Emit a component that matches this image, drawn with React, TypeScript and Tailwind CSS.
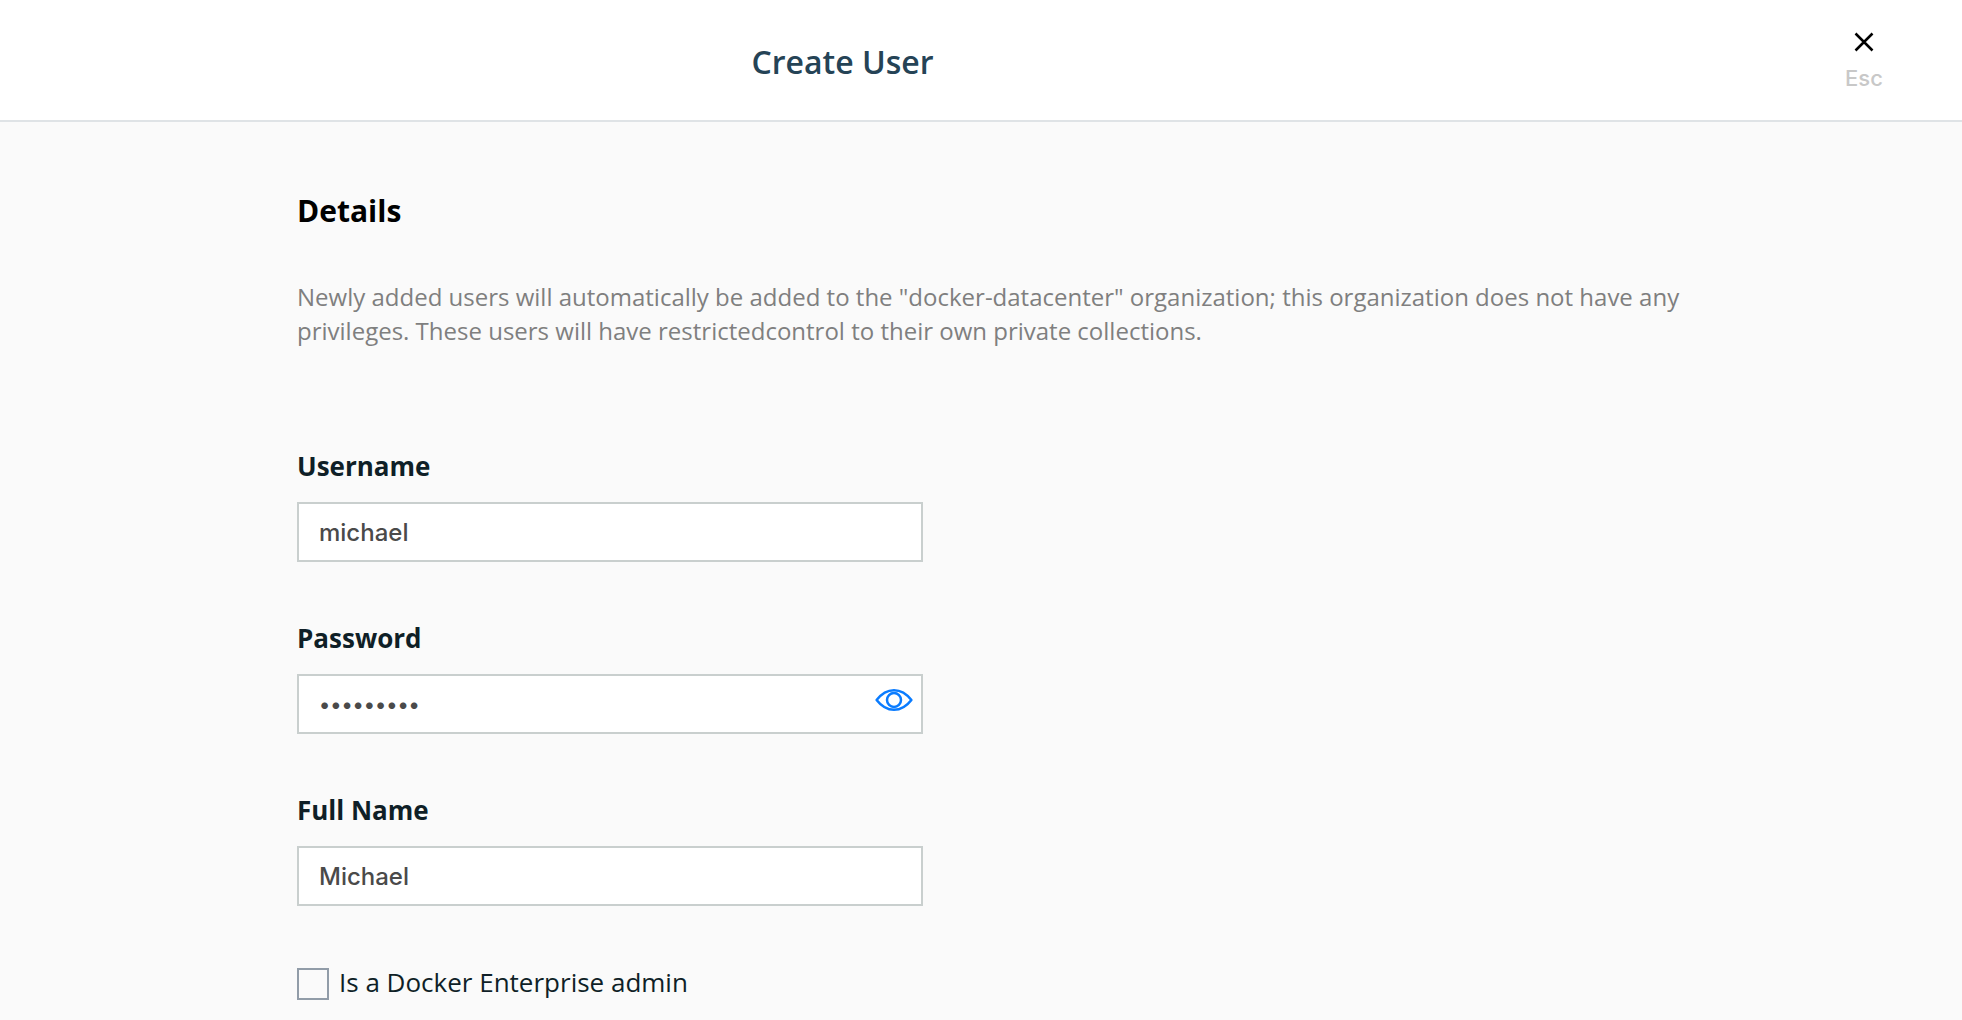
import { useState, type ReactNode } from "react";

type FieldProps = {
  id: string;
  label: string;
  value: string;
  type?: string;
  inputClass?: string;
  children?: ReactNode;
};

function Field({ id, label, value, type = "text", inputClass = "text-2xl", children }: FieldProps) {
  return (
    <div>
      <label htmlFor={id} className="block text-[26px] leading-9 font-bold text-[#0f1f27]">
        {label}
      </label>
      <div className="relative mt-[18px] w-full max-w-[626px]">
        <input
          id={id}
          type={type}
          defaultValue={value}
          className={`block h-[60px] w-full border-2 border-[#c9cfce] bg-white px-5 font-['Inter',sans-serif] font-medium text-[#4a4a4a] outline-none ${inputClass}`}
        />
        {children}
      </div>
    </div>
  );
}

export default function App() {
  const [shown, setShown] = useState(false);
  return (
    <div className="min-h-screen bg-[#fafafa] font-['Open_Sans',sans-serif]">
      <header className="flex h-[122px] items-center border-b-2 border-[#dfe3e6] bg-white pr-[76px]">
        <h1 className="flex-1 pt-1 pr-[157px] text-center text-[32px] leading-10 font-semibold text-[#254356]">
          Create User
        </h1>
        <button type="button" className="flex w-[44px] flex-col items-center gap-3 pt-1 text-[#c8c8c8]">
          <svg viewBox="0 0 20 20" className="size-5" fill="none" stroke="#000" strokeWidth="2.5">
            <path d="M1.5 1.5 18.5 18.5M18.5 1.5 1.5 18.5" />
          </svg>
          <span className="font-['Inter',sans-serif] text-[22px] leading-7 font-medium">Esc</span>
        </button>
      </header>
      <main className="px-[297px] pt-[69px] max-lg:px-8">
        <h2 className="text-[30px] leading-10 font-bold text-black">Details</h2>
        <p className="mt-[49px] max-w-[1400px] text-2xl leading-[34px] text-[#7f7f7f] lg:-mr-8">
          Newly added users will automatically be added to the "docker-datacenter" organization; this
          organization does not have any privileges. These users will have restrictedcontrol to their own
          private collections.
        </p>
        <form className="mt-[100px] flex flex-col gap-[58px]">
          <Field id="username" label="Username" value="michael" />
          <Field
            id="password"
            label="Password"
            value="password1"
            type={shown ? "text" : "password"}
            inputClass={shown ? "text-2xl" : "text-[21px]"}
          >
            <button
              type="button"
              aria-label="Show password"
              onClick={() => setShown(!shown)}
              className="absolute top-[13px] right-[9px]"
            >
              <svg viewBox="0 0 40 26" className="h-[26px] w-10" fill="none" stroke="#0a7cff" strokeWidth="2.5" strokeLinejoin="round">
                <path d="M2.6 13C8 6 14 3.2 20 3.2S32 6 37.4 13C32 20 26 22.8 20 22.8S8 20 2.6 13Z" />
                <circle cx="20" cy="13" r="7" />
              </svg>
            </button>
          </Field>
          <Field id="fullname" label="Full Name" value="Michael" />
          <label className="flex items-end gap-[10px] text-[26px] leading-9 text-[#0f1f27]">
            <input type="checkbox" className="size-8 appearance-none border-2 border-[#919ca8] checked:bg-[#0a7cff]" />
            Is a Docker Enterprise admin
          </label>
        </form>
      </main>
    </div>
  );
}
